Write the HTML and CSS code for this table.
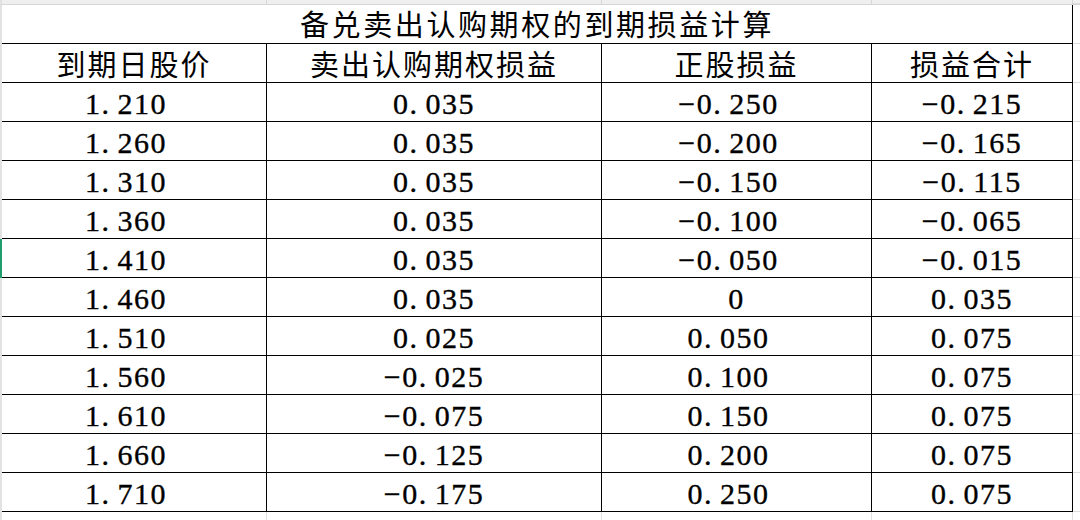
FILE: index.html
```html
<!DOCTYPE html>
<html lang="zh-CN">
<head>
<meta charset="utf-8">
<title>备兑卖出认购期权的到期损益计算</title>
<link rel="stylesheet" href="styles.css">
</head>
<body>
<div class="sheet">
  <div class="line band"><div></div><div></div><div></div><div></div><div class="f"></div></div>
  <div class="line title-line"><div class="c title">备兑卖出认购期权的到期损益计算</div><div class="f"></div></div>
  <div class="line"><div class="c h">到期日股价</div><div class="c h">卖出认购期权损益</div><div class="c h">正股损益</div><div class="c h">损益合计</div><div class="f"></div></div>
  <div class="line"><div class="c n off">1<span class="dt">.</span>210</div><div class="c n">0<span class="dt">.</span>035</div><div class="c n off">−0<span class="dt">.</span>250</div><div class="c n">−0<span class="dt">.</span>215</div><div class="f"></div></div>
  <div class="line"><div class="c n off">1<span class="dt">.</span>260</div><div class="c n">0<span class="dt">.</span>035</div><div class="c n off">−0<span class="dt">.</span>200</div><div class="c n">−0<span class="dt">.</span>165</div><div class="f"></div></div>
  <div class="line"><div class="c n off">1<span class="dt">.</span>310</div><div class="c n">0<span class="dt">.</span>035</div><div class="c n off">−0<span class="dt">.</span>150</div><div class="c n">−0<span class="dt">.</span>115</div><div class="f"></div></div>
  <div class="line"><div class="c n off">1<span class="dt">.</span>360</div><div class="c n">0<span class="dt">.</span>035</div><div class="c n off">−0<span class="dt">.</span>100</div><div class="c n">−0<span class="dt">.</span>065</div><div class="f"></div></div>
  <div class="line sel"><div class="c n off">1<span class="dt">.</span>410</div><div class="c n">0<span class="dt">.</span>035</div><div class="c n off">−0<span class="dt">.</span>050</div><div class="c n">−0<span class="dt">.</span>015</div><div class="f"></div></div>
  <div class="line"><div class="c n off">1<span class="dt">.</span>460</div><div class="c n">0<span class="dt">.</span>035</div><div class="c n">0</div><div class="c n">0<span class="dt">.</span>035</div><div class="f"></div></div>
  <div class="line"><div class="c n off">1<span class="dt">.</span>510</div><div class="c n">0<span class="dt">.</span>025</div><div class="c n off">0<span class="dt">.</span>050</div><div class="c n">0<span class="dt">.</span>075</div><div class="f"></div></div>
  <div class="line"><div class="c n off">1<span class="dt">.</span>560</div><div class="c n">−0<span class="dt">.</span>025</div><div class="c n off">0<span class="dt">.</span>100</div><div class="c n">0<span class="dt">.</span>075</div><div class="f"></div></div>
  <div class="line"><div class="c n off">1<span class="dt">.</span>610</div><div class="c n">−0<span class="dt">.</span>075</div><div class="c n off">0<span class="dt">.</span>150</div><div class="c n">0<span class="dt">.</span>075</div><div class="f"></div></div>
  <div class="line"><div class="c n off">1<span class="dt">.</span>660</div><div class="c n">−0<span class="dt">.</span>125</div><div class="c n off">0<span class="dt">.</span>200</div><div class="c n">0<span class="dt">.</span>075</div><div class="f"></div></div>
  <div class="line"><div class="c n off">1<span class="dt">.</span>710</div><div class="c n">−0<span class="dt">.</span>175</div><div class="c n off">0<span class="dt">.</span>250</div><div class="c n">0<span class="dt">.</span>075</div><div class="f"></div></div>
  <div class="line below"><div></div><div></div><div></div><div></div><div class="f"></div></div>
</div>
</body>
</html>
```
FILE: styles.css
```css
* { box-sizing: border-box; }
html, body { margin: 0; padding: 0; background: #ffffff; }
body {
  width: 1080px;
  height: 520px;
  overflow: hidden;
  color: #000;
  font-family: "Noto Sans CJK SC", "Noto Sans CJK JP", sans-serif;
}
.sheet {
  display: flex;
  flex-direction: column;
  height: 520px;
}
.line {
  display: grid;
  grid-template-columns: 265px 335px 270px 201px 1fr;
  height: 39px;
  border-left: 2px solid #e2e2e2;
}
.line.sel { border-left-color: #1f9d6c; }
.band {
  height: 5px;
  background: #efefef;
  border-bottom: 1px solid #d6d6d6;
}
.band > div { border-right: 1px solid #d6d6d6; }
.band > .f { border-right: none; }
.title-line { grid-template-columns: 1071px 1fr; }
.c {
  display: flex;
  align-items: center;
  justify-content: center;
  border-right: 1px solid #000;
  border-bottom: 1px solid #000;
  white-space: nowrap;
}
.f { border-bottom: 1px solid #dcdcdc; }
.title {
  font-size: 29px;
  line-height: 1;
  letter-spacing: 2.6px;
  padding-bottom: 1px;
}
.h {
  font-size: 29px;
  line-height: 1;
  letter-spacing: 2px;
  padding-top: 1px;
}
.n {
  font-family: "Liberation Serif", "Times New Roman", serif;
  font-size: 30px;
  line-height: 1;
  letter-spacing: 1.5px;
  padding-top: 3px;
  -webkit-text-stroke: 0.35px #000;
}
.n.off { padding-right: 16px; }
.dt { letter-spacing: 8.5px; }
.below {
  flex: 1;
  height: auto;
}
.below > div { border-right: 1px solid #e0e0e0; }
.below > .f { border-right: none; border-bottom: none; }
```
